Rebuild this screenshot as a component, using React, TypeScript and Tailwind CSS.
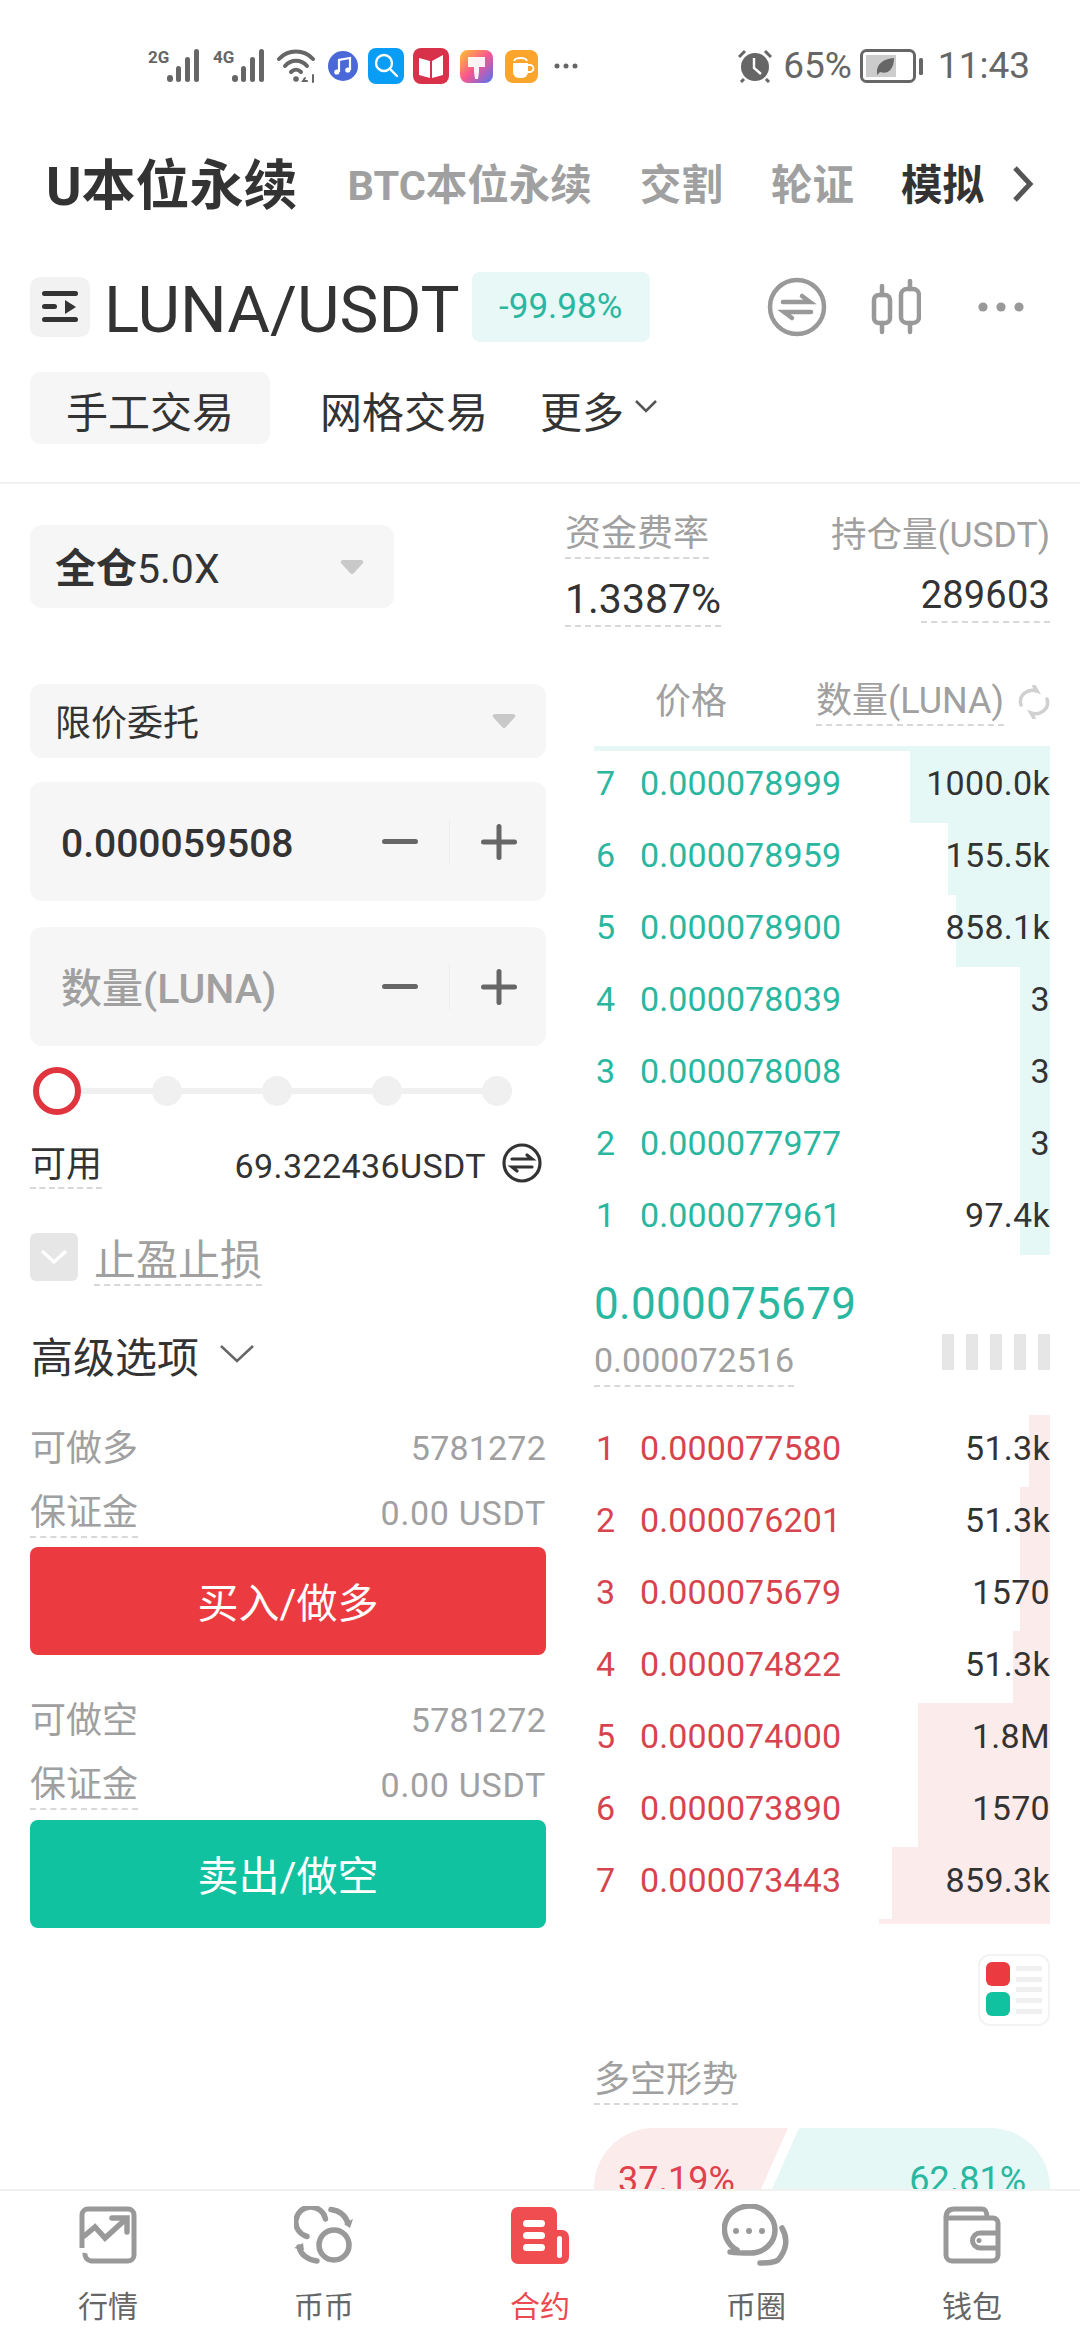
import React from "react";

const asks = [
  ["7", "0.000078999", "1000.0k", 140],
  ["6", "0.000078959", "155.5k", 102],
  ["5", "0.000078900", "858.1k", 94],
  ["4", "0.000078039", "3", 30],
  ["3", "0.000078008", "3", 30],
  ["2", "0.000077977", "3", 30],
  ["1", "0.000077961", "97.4k", 30],
] as const;
const bids = [
  ["1", "0.000077580", "51.3k", 21],
  ["2", "0.000076201", "51.3k", 30],
  ["3", "0.000075679", "1570", 30],
  ["4", "0.000074822", "51.3k", 37],
  ["5", "0.000074000", "1.8M", 132],
  ["6", "0.000073890", "1570", 132],
  ["7", "0.000073443", "859.3k", 158],
] as const;

function Signal() {
  return (
    <svg width="34" height="34" viewBox="0 0 34 34" fill="#666">
      <rect x="0" y="26" width="6" height="7" rx="3" />
      <rect x="9" y="17" width="5" height="16" rx="2.5" />
      <rect x="18" y="8" width="5" height="25" rx="2.5" />
      <rect x="27" y="0" width="5" height="33" rx="2.5" />
    </svg>
  );
}

function StatusBar() {
  return (
    <div className="flex h-[132px] items-center justify-between pl-[148px] pr-[50px]">
      <div className="flex items-center">
        <div className="flex items-start">
          <span className="w-[19px] text-[17px] leading-[17px] font-bold text-[#666]">2G</span>
          <Signal />
        </div>
        <div className="ml-[12px] flex items-start">
          <span className="w-[19px] text-[17px] leading-[17px] font-bold text-[#666]">4G</span>
          <Signal />
        </div>
        <svg className="ml-[11px]" width="40" height="36" viewBox="0 0 40 36" fill="none" stroke="#666" strokeWidth="4" strokeLinecap="round">
          <path d="M2 11C11 1 27 1 36 11" />
          <path d="M8 18C14 11 24 11 30 18" />
          <path d="M14 24C17 21 21 21 24 24" />
          <circle cx="19" cy="31" r="2.8" fill="#666" stroke="none" />
          <path d="M28 30l-2 3h4M36 27v7" strokeWidth="2" />
        </svg>
        <svg className="ml-[10px]" width="32" height="32" viewBox="0 0 32 32">
          <circle cx="16" cy="16" r="15" fill="#4a68d8" />
          <path d="M12 22V10l11-2v12" fill="none" stroke="#fff" strokeWidth="2.2" />
          <circle cx="9.8" cy="22" r="2.6" fill="#fff" />
          <circle cx="20.8" cy="20" r="2.6" fill="#fff" />
        </svg>
        <svg className="ml-[9px]" width="36" height="36" viewBox="0 0 36 36">
          <rect width="36" height="36" rx="8" fill="#0a9df5" />
          <circle cx="16" cy="15" r="8" fill="none" stroke="#fff" strokeWidth="2.4" />
          <path d="M22 21l7 7" stroke="#fff" strokeWidth="2.4" strokeLinecap="round" />
        </svg>
        <svg className="ml-[9px]" width="36" height="36" viewBox="0 0 36 36">
          <rect width="36" height="36" rx="8" fill="#d8324a" />
          <path d="M6 10l11 3v17L6 27zM19 13l11-6v20l-11 3z" fill="#fff" />
        </svg>
        <svg className="ml-[11px]" width="33" height="33" viewBox="0 0 33 33">
          <defs>
            <linearGradient id="bg1" x1="0" y1="0" x2="1" y2="1">
              <stop offset="0" stopColor="#ffc42e" />
              <stop offset="0.5" stopColor="#f9568f" />
              <stop offset="1" stopColor="#4d74f5" />
            </linearGradient>
          </defs>
          <rect width="33" height="33" rx="8" fill="url(#bg1)" />
          <path d="M8 7h17v10h-6v5l-1 7h-3l-1-7v-5H8z" fill="#fff" opacity="0.92" />
        </svg>
        <svg className="ml-[12px]" width="33" height="33" viewBox="0 0 33 33">
          <rect width="33" height="33" rx="8" fill="#fba52c" />
          <path d="M8 13h15v9a6 6 0 0 1-6 6h-3a6 6 0 0 1-6-6z" fill="#fff" />
          <path d="M9 11c1-4 12-4 13 0" fill="none" stroke="#fff" strokeWidth="1.8" />
          <path d="M23 15h2a3 3 0 0 1 0 7h-2" fill="none" stroke="#fff" strokeWidth="1.8" />
        </svg>
        <svg className="ml-[16px]" width="24" height="6" viewBox="0 0 24 6" fill="#666">
          <circle cx="3" cy="3" r="2.5" />
          <circle cx="12" cy="3" r="2.5" />
          <circle cx="21" cy="3" r="2.5" />
        </svg>
      </div>
      <div className="flex items-center text-[#666]">
        <svg width="34" height="34" viewBox="0 0 34 34" fill="#666">
          <circle cx="17" cy="18" r="14" />
          <path d="M16 9v10l7 6" fill="none" stroke="#fff" strokeWidth="2.4" />
          <path d="M1 8l6-6M33 8l-6-6M6 30l-3 3M28 30l3 3" stroke="#666" strokeWidth="3" />
        </svg>
        <span className="ml-[11px] text-[37px] leading-[44px]">65%</span>
        <svg className="ml-[8px]" width="64" height="34" viewBox="0 0 64 34">
          <rect x="1.5" y="1.5" width="53" height="31" rx="5" fill="none" stroke="#666" strokeWidth="3" />
          <rect x="6" y="6" width="30" height="22" fill="#ccc" />
          <path d="M17 25c-1-10 6-15 17-16 0 11-6 17-14 14l-3 3z" fill="#666" />
          <rect x="59" y="9" width="4" height="17" rx="1.5" fill="#666" />
        </svg>
        <span className="ml-[14px] text-[37px] leading-[44px]">11:43</span>
      </div>
    </div>
  );
}

function Tabs() {
  return (
    <div className="flex h-[104px] items-center pl-[46px] pt-[5px] font-bold">
      <span className="text-[54px] leading-[64px] text-[#333]">U本位永续</span>
      <span className="ml-[50px] text-[41.5px] text-[#a0a0a0]">BTC本位永续</span>
      <span className="ml-[48px] text-[41.5px] text-[#a0a0a0]">交割</span>
      <span className="ml-[48px] text-[41.5px] text-[#a0a0a0]">轮证</span>
      <span className="ml-[47px] text-[41.5px] text-[#333]">模拟</span>
      <svg className="ml-[28px] mt-[-6px]" width="24" height="38" viewBox="0 0 24 38" fill="none" stroke="#555" strokeWidth="5">
        <path d="M3 3l15 16L3 35" />
      </svg>
    </div>
  );
}

function PairRow() {
  return (
    <div className="mt-[36px] flex h-[70px] items-center pl-[30px]">
      <div className="flex h-[60px] w-[60px] items-center justify-center rounded-[10px] bg-[#f2f2f2]">
        <svg width="36" height="36" viewBox="0 0 36 36" fill="#333">
          <rect x="0" y="2" width="36" height="5" rx="2.5" />
          <rect x="0" y="15" width="15" height="5" rx="2.5" />
          <path d="M23 11l11 7-11 7z" />
          <rect x="0" y="28" width="36" height="5" rx="2.5" />
        </svg>
      </div>
      <span className="ml-[14px] mt-[5px] text-[65.5px] leading-[70px] text-[#333]">LUNA/USDT</span>
      <div className="ml-[12px] flex h-[70px] w-[178px] items-center justify-center rounded-[8px] bg-[#e7f8f6] text-[35px] text-[#2ab7a0]">
        -99.98%
      </div>
      <svg className="ml-[116px]" width="62" height="62" viewBox="0 0 62 62" fill="none" stroke="#999" strokeWidth="4.5" strokeLinecap="round">
        <circle cx="31" cy="31" r="27" />
        <path d="M17 26h27l-8-6M45 36H18l8 6" />
      </svg>
      <svg className="ml-[43px]" width="50" height="56" viewBox="0 0 50 56" fill="none" stroke="#999" strokeWidth="4.5" strokeLinecap="round">
        <rect x="3" y="16" width="16" height="28" rx="5" />
        <path d="M11 7v9M11 44v9" />
        <rect x="30" y="10" width="18" height="34" rx="6" />
        <path d="M39 2v8M39 44v9" />
      </svg>
      <svg className="ml-[57px]" width="46" height="10" viewBox="0 0 46 10" fill="#999">
        <circle cx="5" cy="5" r="4.6" />
        <circle cx="23" cy="5" r="4.6" />
        <circle cx="41" cy="5" r="4.6" />
      </svg>
    </div>
  );
}

function SubTabs() {
  return (
    <div className="mt-[30px] flex h-[72px] items-center pl-[30px] text-[42px] text-[#333]">
      <div className="flex h-[72px] w-[240px] items-center justify-center rounded-[10px] bg-[#f6f6f6] pt-[10px]">手工交易</div>
      <span className="ml-[50px] pt-[10px]">网格交易</span>
      <span className="ml-[52px] pt-[10px]">更多</span>
      <svg className="ml-[10px] mt-[-4px]" width="24" height="14" viewBox="0 0 24 14" fill="none" stroke="#555" strokeWidth="2.6">
        <path d="M2 2l10 10L22 2" />
      </svg>
    </div>
  );
}

function Caret() {
  return (
    <svg width="24" height="16" viewBox="0 0 24 16" fill="#c9c9c9">
      <path d="M3 1h18c2 0 3 2 2 3L14 14c-1 1.500-3 1.500-4 0L1 4C0 3 1 1 3 1z" />
    </svg>
  );
}

function Stepper({ children }: { children: React.ReactNode }) {
  return (
    <div className="flex h-[119px] items-center rounded-[12px] bg-[#f6f6f6] pl-[31px]">
      <div className="pt-[6px]">{children}</div>
      <svg className="ml-auto" width="36" height="6" viewBox="0 0 36 6" fill="#666">
        <rect width="36" height="5" rx="2.500" />
      </svg>
      <div className="ml-[31px] h-[46px] w-[1px] bg-[#eeeeee]" />
      <svg className="ml-[31px] mr-[29px]" width="36" height="36" viewBox="0 0 36 36" fill="#666">
        <rect y="15.500" width="36" height="5" rx="2.500" />
        <rect x="15.500" width="5" height="36" rx="2.500" />
      </svg>
    </div>
  );
}

function Slider() {
  return (
    <div className="relative mt-[21px] flex h-[48px] items-center pl-[3px]">
      <div className="absolute left-[20px] right-[34px] top-[21px] h-[6px] bg-[#f0f0f0]" />
      <div className="relative mr-[71px] h-[48px] w-[48px] rounded-full border-[6px] border-[#e0353f] bg-white" />
      <div className="flex gap-[80px]">
        <div className="relative h-[30px] w-[30px] rounded-full bg-[#f0f0f0]" />
        <div className="relative h-[30px] w-[30px] rounded-full bg-[#f0f0f0]" />
        <div className="relative h-[30px] w-[30px] rounded-full bg-[#f0f0f0]" />
        <div className="relative h-[30px] w-[30px] rounded-full bg-[#f0f0f0]" />
      </div>
    </div>
  );
}

function Info({ label, value, dashed }: { label: string; value: string; dashed?: boolean }) {
  return (
    <div className="flex h-[65px] items-center justify-between text-[#a0a0a0]">
      <span className={dashed ? "border-b-2 border-dashed border-[#d8d8d8] text-[36px] leading-[46px]" : "text-[36px] leading-[46px]"}>{label}</span>
      <span className={dashed ? "text-[34px] tracking-[0.7px]" : "text-[34px] tracking-[0.2px]"}>{value}</span>
    </div>
  );
}

function LeftCol() {
  return (
    <div className="w-[516px] shrink-0">
      <div className="mt-[41px] flex h-[83px] w-[364px] items-center justify-between rounded-[12px] bg-[#f6f6f6] pl-[25px] pr-[30px] text-[41px] text-[#333]">
        <span className="pt-[6px]"><b>全仓</b>5.0X</span>
        <Caret />
      </div>
      <div className="mt-[76px] flex h-[74px] items-center justify-between rounded-[12px] bg-[#f6f6f6] pl-[25px] pr-[30px] text-[36px] text-[#333]">
        <span className="pt-[5px]">限价委托</span>
        <Caret />
      </div>
      <div className="mt-[24px]">
        <Stepper><span className="text-[39px] font-medium text-[#333]">0.000059508</span></Stepper>
      </div>
      <div className="mt-[26px]">
        <Stepper><span className="text-[41px] font-medium text-[#a0a0a0]">数量(LUNA)</span></Stepper>
      </div>
      <Slider />
      <div className="mt-[29px] flex h-[44px] items-center text-[#333]">
        <span className="border-b-2 border-dashed border-[#d8d8d8] text-[36px] leading-[44px]">可用</span>
        <span className="ml-auto text-[34px] tracking-[0.4px]">69.322436USDT</span>
        <svg className="ml-[16px] mr-[4px] mt-[-6px]" width="40" height="40" viewBox="0 0 40 40" fill="none" stroke="#333" strokeWidth="3.2" strokeLinecap="round">
          <circle cx="20" cy="20" r="18" />
          <path d="M10 16h20l-5-4M30 24H10l5 4" />
        </svg>
      </div>
      <div className="mt-[45px] flex h-[48px] items-center">
        <div className="flex h-[48px] w-[48px] items-center justify-center rounded-[6px] bg-[#e6e6e6]">
          <svg width="28" height="18" viewBox="0 0 28 18" fill="none" stroke="#fff" strokeWidth="3.500">
            <path d="M2 3l12 11L26 3" />
          </svg>
        </div>
        <span className="ml-[16px] mt-[4px] border-b-2 border-dashed border-[#d8d8d8] pt-[6px] text-[42px] leading-[46px] text-[#a0a0a0]">止盈止损</span>
      </div>
      <div className="mt-[49px] flex h-[56px] items-center pl-[1px] text-[42px] text-[#333]">
        高级选项
        <svg className="ml-[20px] mt-[-8px]" width="36" height="20" viewBox="0 0 36 20" fill="none" stroke="#666" strokeWidth="2.500">
          <path d="M2 2l16 15L34 2" />
        </svg>
      </div>
      <div className="mt-[30px]"><Info label="可做多" value="5781272" /></div>
      <Info label="保证金" value="0.00 USDT" dashed />
      <button className="mt-[1px] block h-[108px] w-full rounded-[8px] bg-[#ec3b40] pt-[8px] text-[41px] text-white">买入/做多</button>
      <div className="mt-[33px]"><Info label="可做空" value="5781272" /></div>
      <Info label="保证金" value="0.00 USDT" dashed />
      <button className="mt-[2px] block h-[108px] w-full rounded-[8px] bg-[#11c2a0] pt-[8px] text-[41px] text-white">卖出/做空</button>
    </div>
  );
}

function Row({ r, side }: { r: readonly [string, string, string, number]; side: "ask" | "bid" }) {
  const ask = side === "ask";
  return (
    <div className={ask ? "relative flex h-[72px] items-center pb-[8px] text-[34px]" : "relative flex h-[72px] items-center pb-[6px] text-[34px]"}>
      <div
        className={ask ? "absolute inset-y-0 right-0 bg-[#e6f8f6]" : "absolute inset-y-0 right-0 bg-[#fcebeb]"}
        style={{ width: r[3] }}
      />
      <span className={ask ? "relative w-[46px] pl-[2px] text-[#2ab7a0]" : "relative w-[46px] pl-[2px] text-[#d6454e]"}>{r[0]}</span>
      <span className={ask ? "relative text-[#2ab7a0] tracking-[0.1px]" : "relative text-[#d6454e] tracking-[0.1px]"}>{r[1]}</span>
      <span className="relative ml-auto text-[#333] tracking-[0.3px]">{r[2]}</span>
    </div>
  );
}

function RightCol() {
  return (
    <div className="w-[485px] shrink-0">
      <div className="mt-[29px] flex justify-between">
        <div className="flex flex-col items-start">
          <span className="border-b-2 border-dashed border-[#d8d8d8] pb-[2px] text-[36px] leading-[42px] text-[#a0a0a0]">资金费率</span>
          <span className="mt-[20px] border-b-2 border-dashed border-[#d8d8d8] pb-[5px] text-[41px] leading-[41px] text-[#333]">1.3387%</span>
        </div>
        <div className="flex flex-col items-end">
          <span className="text-[35.5px] leading-[44px] text-[#a0a0a0]">持仓量(USDT)</span>
          <span className="mt-[18px] border-b-2 border-dashed border-[#d8d8d8] pb-[5px] text-[38px] leading-[41px] tracking-[0.2px] text-[#333]">289603</span>
        </div>
      </div>
      <div className="mt-[51px] flex h-[48px] items-center whitespace-nowrap text-[36px] text-[#a0a0a0]">
        <span className="ml-[90px] shrink-0">价格</span>
        <span className="ml-[89px] shrink-0 border-b-2 border-dashed border-[#d8d8d8] leading-[46px]">数量(LUNA)</span>
        <svg className="ml-auto shrink-0" width="32" height="34" viewBox="0 0 32 34" fill="none" stroke="#d0d0d0" strokeWidth="3.500" strokeLinecap="round">
          <path d="M3 20C0 10 10 3 19 6l-3-5M29 14c3 10-7 17-16 14l3 5" />
        </svg>
      </div>
      <div className="ml-[29px] mt-[20px]">
        <div className="h-[5px] bg-[#e6f8f6]" />
        {asks.map((r) => <Row key={r[0]} r={r} side="ask" />)}
        <div className="mt-[24px] text-[44px] leading-[50px] tracking-[0.3px] text-[#2ab7a0]">0.000075679</div>
        <div className="flex items-center justify-between">
          <span className="mt-[6px] border-b-2 border-dashed border-[#d8d8d8] text-[34px] leading-[50px] text-[#a0a0a0]">0.000072516</span>
          <div className="mt-[-12px] flex gap-[12px]">
            <div className="h-[36px] w-[12px] bg-[#e6e6e6]" />
            <div className="h-[36px] w-[12px] bg-[#e6e6e6]" />
            <div className="h-[36px] w-[12px] bg-[#e6e6e6]" />
            <div className="h-[36px] w-[12px] bg-[#e6e6e6]" />
            <div className="h-[36px] w-[12px] bg-[#e6e6e6]" />
          </div>
        </div>
        <div className="mt-[28px]">
          {bids.map((r) => <Row key={r[0]} r={r} side="bid" />)}
        </div>
        <div className="ml-auto h-[5px] w-[171px] bg-[#fcebeb]" />
        <div className="ml-auto mt-[30px] flex h-[72px] w-[72px] gap-[6px] rounded-[12px] border-2 border-[#f3f3f3] bg-white p-[6px]">
          <div className="flex flex-col gap-[6px]">
            <div className="h-[24px] w-[24px] rounded-[6px] bg-[#ec3b40]" />
            <div className="h-[24px] w-[24px] rounded-[6px] bg-[#11c2a0]" />
          </div>
          <div className="flex flex-1 flex-col justify-around py-[1px]">
            <div className="h-[5px] bg-[#f0f0f0]" />
            <div className="h-[5px] bg-[#f0f0f0]" />
            <div className="h-[5px] bg-[#f0f0f0]" />
            <div className="h-[5px] bg-[#f0f0f0]" />
            <div className="h-[5px] bg-[#f0f0f0]" />
          </div>
        </div>
        <div className="mt-[31px]">
          <span className="inline-block border-b-2 border-dashed border-[#d8d8d8] text-[36px] leading-[46px] text-[#a0a0a0]">多空形势</span>
        </div>
        <div className="relative mt-[23px] flex h-[120px] overflow-hidden rounded-[60px]">
          <div className="h-full w-[194px] shrink-0 bg-[#fcebeb] pl-[24px] pt-[25px] text-[36px] text-[#e0414a] [clip-path:polygon(0_0,100%_0,141px_100%,0_100%)]">37.19%</div>
          <div className="ml-[-42px] h-full flex-1 bg-[#e6f8f6] pr-[24px] pt-[25px] text-right text-[36px] text-[#2ab7a0] [clip-path:polygon(53px_0,100%_0,100%_100%,0_100%)]">62.81%</div>
        </div>
      </div>
    </div>
  );
}

function NavItem({ label, active, children }: { label: string; active?: boolean; children: React.ReactNode }) {
  return (
    <div className="flex flex-col items-center">
      <div className="flex h-[60px] items-center">{children}</div>
      <span className={active ? "mt-[22px] text-[30px] leading-[40px] text-[#ec4a50]" : "mt-[22px] text-[30px] leading-[40px] text-[#666]"}>{label}</span>
    </div>
  );
}

function Nav() {
  return (
    <div className="grid h-[151px] shrink-0 grid-cols-5 border-t-2 border-[#f1f1f1] bg-white pt-[14px]">
      <NavItem label="行情">
        <svg width="58" height="58" viewBox="0 0 58 58" fill="none" stroke="#999" strokeWidth="5">
          <path d="M3 42V9a6 6 0 0 1 6-6h40a6 6 0 0 1 6 6v40a6 6 0 0 1-6 6H12a7 7 0 0 1-6-8" strokeLinejoin="round" />
          <path d="M4 31l12-10 10 11 22-20" strokeWidth="5.500" />
          <path d="M33 12h15v14" strokeWidth="5.500" strokeLinecap="round" />
        </svg>
      </NavItem>
      <NavItem label="币币">
        <svg width="60" height="58" viewBox="0 0 60 58" fill="none" stroke="#999" strokeWidth="5.500" strokeLinecap="round">
          <path d="M13 30.500A15 15 0 1 1 31.500 13" />
          <circle cx="40" cy="39" r="15" />
          <path d="M37 3.500C45 4.500 51 9 54 17" />
          <path d="M50 18l9-5-3 9z" fill="#999" stroke="none" />
          <path d="M23 55C14 54 7 49 5 41" />
          <path d="M0 42l9-5 1 7z" fill="#999" stroke="none" />
        </svg>
      </NavItem>
      <NavItem label="合约" active>
        <svg width="58" height="58" viewBox="0 0 58 58">
          <path d="M7 1h32a7 7 0 0 1 7 7v16h5a7 7 0 0 1 7 7v20a7 7 0 0 1-7 7H7a7 7 0 0 1-7-7V8a7 7 0 0 1 7-7z" fill="#f04d51" />
          <rect x="12" y="14" width="22" height="7" rx="3.500" fill="#fff" />
          <rect x="12" y="26" width="22" height="7" rx="3.500" fill="#fff" />
          <rect x="12" y="38" width="22" height="7" rx="3.500" fill="#fff" />
          <rect x="46" y="30" width="5" height="22" rx="2.500" fill="#fff" />
        </svg>
      </NavItem>
      <NavItem label="币圈">
        <svg width="68" height="62" viewBox="0 0 68 62" fill="none" stroke="#999" strokeWidth="5.500" strokeLinecap="round">
          <path d="M15 46C4 40 1 28 3 20 6 8 17 2 28 2c13 0 25 11 25 24 0 13-11 23-25 23-7 0-12 0-20-1" />
          <circle cx="14" cy="27" r="3" fill="#999" stroke="none" />
          <circle cx="27" cy="27" r="3" fill="#999" stroke="none" />
          <circle cx="40" cy="27" r="3" fill="#999" stroke="none" />
          <path d="M60 24c6 10 5 22-4 32-4 3-10 3-18 3" />
        </svg>
      </NavItem>
      <NavItem label="钱包">
        <svg width="58" height="58" viewBox="0 0 58 58" fill="none" stroke="#999" strokeWidth="5">
          <path d="M3 12V49a6 6 0 0 0 6 6h40a6 6 0 0 0 6-6V17a5 5 0 0 0-5-5H3z" strokeLinejoin="round" />
          <path d="M3 12c0-6 3-9 8-9h28c4 0 5 3 5 9" />
          <path d="M55 27H37a7 7 0 0 0 0 15h18" />
          <circle cx="36" cy="34.500" r="2.500" fill="#999" stroke="none" />
        </svg>
      </NavItem>
    </div>
  );
}

export default function App() {
  return (
    <div className="flex h-[2340px] w-[1080px] flex-col overflow-hidden bg-white font-['Roboto','Noto_Sans_CJK_SC',sans-serif]">
      <div className="min-h-0 flex-1 overflow-hidden">
        <StatusBar />
        <Tabs />
        <PairRow />
        <SubTabs />
        <div className="mt-[38px] h-[2px] bg-[#f1f1f1]" />
        <div className="flex gap-[19px] px-[30px]">
          <LeftCol />
          <RightCol />
        </div>
      </div>
      <Nav />
    </div>
  );
}
